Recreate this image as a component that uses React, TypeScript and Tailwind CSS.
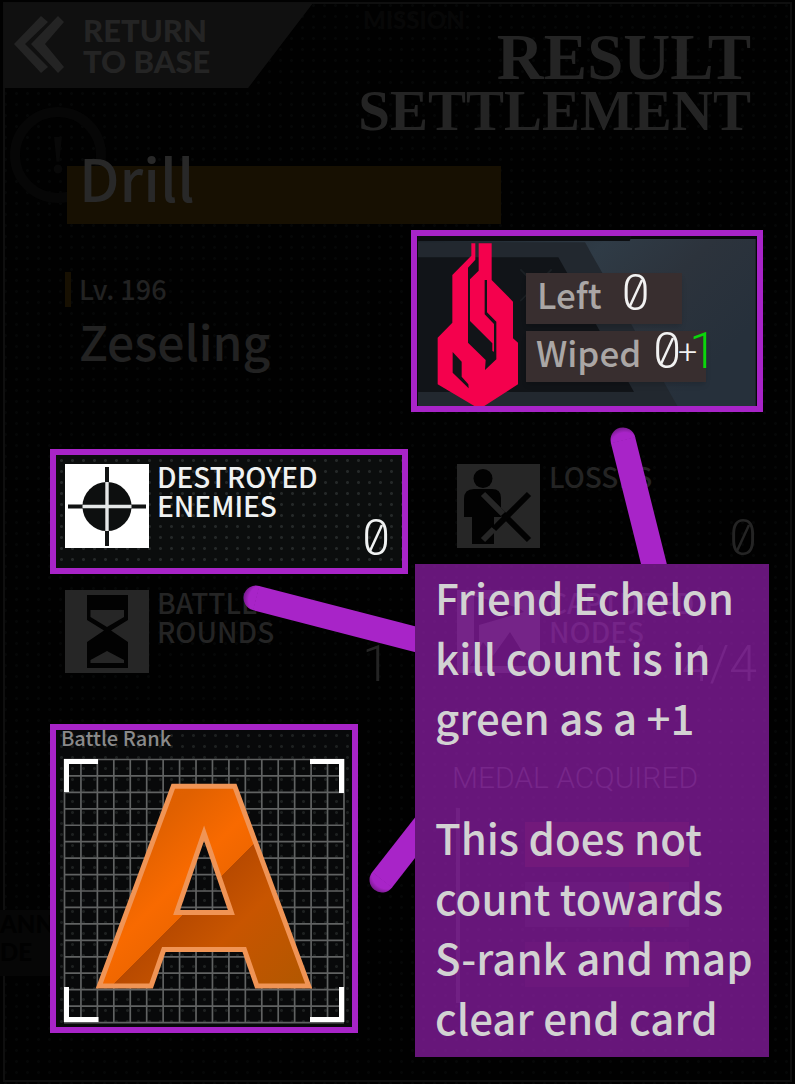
import type { ReactNode } from "react";

const SANS = "font-['Noto_Sans_CJK_SC','Noto_Sans',sans-serif]";

function TargetIcon() {
  return (
    <svg viewBox="0 0 84 84" className="size-[84px] shrink-0" aria-hidden="true">
      <rect width="84" height="84" fill="#ffffff" />
      <path d="M42 3V82M3 42.5H81" stroke="#111313" strokeWidth="4" />
      <circle cx="42" cy="42.5" r="24.5" fill="#0d0f0f" />
      <path d="M42 18V67M17.5 42.5H66.5" stroke="#e4e6e6" strokeWidth="3.4" />
    </svg>
  );
}

function LossIcon() {
  return (
    <svg viewBox="0 0 84 84" className="size-[84px] shrink-0" aria-hidden="true">
      <rect width="83" height="84" fill="#262626" />
      <circle cx="26" cy="14.500" r="9.500" fill="#020202" />
      <path d="M17 25H35Q44 25 44 34V53H37V80H15V53H7V35Q7 25 17 25Z" fill="#020202" />
      <path d="M26 30L49 53L72 76" stroke="#020202" strokeWidth="6" />
      <path d="M26 30L46 50M26 76L37 65" stroke="#262626" strokeWidth="6" />
      <path d="M72 30L37 65" stroke="#020202" strokeWidth="6" />
    </svg>
  );
}

function HourglassIcon() {
  return (
    <svg viewBox="0 0 84 84" className="size-[84px] shrink-0" aria-hidden="true">
      <rect width="84" height="83" fill="#262626" />
      <path d="M22 5H63V30L46 40.500L63 52V78H22V52L39 40.500L22 30Z" fill="#020202" />
      <path d="M25.500 20H59V27L42 37L25.500 27Z" fill="#262626" />
      <path d="M25.500 70L42 61L59 70V73H25.500Z" fill="#262626" />
    </svg>
  );
}

function FlagIcon() {
  return (
    <svg viewBox="0 0 84 84" className="size-[84px] shrink-0" aria-hidden="true">
      <rect width="83" height="83" fill="#262626" />
      <path d="M17 6L62 18L67 22L22 35V75H17Z" fill="#020202" />
      <path d="M13 76L26 52L36 66L53 42L74 76Z" fill="#020202" />
    </svg>
  );
}

function SlashedZero() {
  return (
    <span className="relative inline-block">
      0
      <svg viewBox="0 0 16 30" className="absolute top-[5px] left-[6px] h-[30px] w-[16px]" aria-hidden="true">
        <path d="M2 28L14 2" stroke="currentColor" strokeWidth="2.5" />
      </svg>
    </span>
  );
}

type StatProps = { icon: ReactNode; lines: string[]; value: ReactNode; highlighted?: boolean };

function Stat({ icon, lines, value, highlighted = false }: StatProps) {
  return (
    <article
      className={
        highlighted
          ? "flex h-[125px] border-[6px] border-[#a824c8] bg-[#0b0d0d] bg-[radial-gradient(circle,#242828_1px,transparent_2px)] bg-[size:11px_11px] pt-[7px] pr-[12px] pb-[10px] pl-[9px] text-[#f0f2f2]"
          : "flex h-[125px] border-[6px] border-transparent pt-[7px] pr-[12px] pb-[10px] pl-[9px] text-[#242424]"
      }
    >
      <div className="pt-0.5">{icon}</div>
      <h3 className="min-w-0 pl-[8px] text-[28px] leading-[29px] font-medium">
        {lines.map((l) => (
          <span key={l} className="block">{l}</span>
        ))}
      </h3>
      <p className="ml-auto self-end font-[Roboto,sans-serif] text-[50px] leading-[40px] font-light">{value}</p>
    </article>
  );
}

function EnemyCard() {
  return (
    <article className="relative ml-auto h-[182px] w-[352px] border-[6px] border-[#a824c8] bg-[#08090b]">
      <svg viewBox="36 33 1020 510" className="absolute inset-0 size-full" aria-hidden="true">
        <defs>
          <linearGradient id="steel" x1="0" y1="0" x2="1" y2="0.5">
            <stop offset="0" stopColor="#1d242b" />
            <stop offset="0.45" stopColor="#2f3b46" />
            <stop offset="0.7" stopColor="#2c333c" />
            <stop offset="1" stopColor="#26303b" />
          </linearGradient>
        </defs>
        <rect x="39" y="42" width="1013" height="501" fill="url(#steel)" />
        <path d="M39 33H680L674 48H39Z" fill="#0c0e11" />
        <path d="M39 52H540L817 543H39Z" fill="#22282f" />
        <path d="M39 97H460L687 501H39Z" fill="#111418" />
        <path d="M346 133L440 228M440 133L346 228" stroke="#1b2024" strokeWidth="5" />
        <path
          d="M199 55H211V104L189 128V353L242 405L240 435L274 403V290L246 262V165H239V268L267 297V380L262 378V355L195 288V163L221 137V55H260V165L324 230V340L339 353V478L238 543H208L98 478V338L142 293V150L199 92Z"
          fill="#f4014d"
        />
        <path d="M143 381L170 410V455L190 478L191 490L143 443Z" fill="#111418" />
      </svg>
      <dl className="relative flex flex-col items-start gap-[7px] pt-[37px] pl-[109px] text-[35px] leading-[42px] font-medium text-[#aaa6a5]">
        <div className="flex h-[51px] w-[156px] bg-[#382e2f] pl-[11px] shadow-md">
          <dt>Left</dt>
          <dd className="pl-[20px] font-[Roboto,sans-serif] text-[50px] leading-[40px] font-light text-[#f2f2f2]"><SlashedZero /></dd>
        </div>
        <div className="flex h-[51px] w-[180px] bg-[#382e2f] pl-[10px] shadow-md">
          <dt>Wiped</dt>
          <dd className="flex pl-[12px] font-[Roboto,sans-serif] text-[50px] leading-[40px] font-light text-[#f2f2f2]">
            <SlashedZero />
            <span className="-ml-[3px] text-[34px]">+</span>
            <span className="-ml-[8px] text-[#0bd60b]">1</span>
          </dd>
        </div>
      </dl>
    </article>
  );
}

const columns = Array.from({ length: 18 }, (_, i) => 64.5 + i * 16.44);
const rows = Array.from({ length: 17 }, (_, i) => 759.5 + i * 16.44);

function RankCard() {
  return (
    <article className="w-[308px] border-[6px] border-[#a824c8] bg-[#08090a] bg-[radial-gradient(circle,#1d2020_1px,transparent_2px)] bg-[size:11px_11px]">
      <h3 className="h-[25px] pl-[5px] text-[20px] leading-[16px] font-medium text-[#8a8a8a]">Battle Rank</h3>
      <svg viewBox="56 755 296 272" className="block w-full overflow-visible" role="img" aria-label="Rank A">
        <defs>
          <linearGradient id="rankFill" gradientUnits="userSpaceOnUse" x1="78" y1="748" x2="338" y2="1008">
            <stop offset="0" stopColor="#d85c00" />
            <stop offset="0.3" stopColor="#e06000" />
            <stop offset="0.45" stopColor="#f86a00" />
            <stop offset="0.522" stopColor="#f06700" />
            <stop offset="0.523" stopColor="#b84a00" />
            <stop offset="0.65" stopColor="#c85500" />
            <stop offset="1" stopColor="#a85800" />
          </linearGradient>
        </defs>
        {columns.map((x) => (
          <path key={x} d={`M${x} 759V1022`} stroke="#606262" strokeWidth="1.7" />
        ))}
        {rows.map((y) => (
          <path key={y} d={`M64 ${y}H344`} stroke="#606262" strokeWidth="1.7" />
        ))}
        <path d="M66.500 792V761.500H98M310 761.500H341.500V793M341.500 987V1019.500H310M98.500 1019.500H66.500V987" fill="none" stroke="#ffffff" strokeWidth="5" />
        <text x="204" y="986" textAnchor="middle" fill="url(#rankFill)" stroke="#f09455" strokeWidth="5" className="font-['DejaVu_Sans',sans-serif] text-[274px] font-bold">
          A
        </text>
      </svg>
    </article>
  );
}

function Medals() {
  return (
    <section className="pt-[34px] pl-[10px]">
      <h3 className="font-[Roboto,sans-serif] text-[30px] leading-[40px] font-light text-[#2a2a2a]">MEDAL ACQUIRED</h3>
      <div className="ml-[4px] mt-[10px] flex h-[195px] flex-col gap-[15px] border-l-4 border-[#1a1a1a] pt-[14px] pl-[65px]">
        <div className="h-[45px] w-[164px] bg-[#1e0a03]" />
        <div className="flex h-[45px] w-[164px] justify-end bg-[#0b0b0b] pr-[20px]">
          <div className="w-[40px] bg-[#1a0a01]" />
        </div>
        <div className="h-[45px] w-[164px] bg-[#0e0606]" />
      </div>
    </section>
  );
}

const pointers = [
  { x: 623, y: 440, angle: 76, length: 160 },
  { x: 256, y: 598, angle: 14.5, length: 190 },
  { x: 382, y: 880, angle: -52, length: 90 },
];

function Pointers() {
  return (
    <svg viewBox="0 0 795 1084" className="pointer-events-none absolute top-0 right-0 h-[1084px] w-[795px]" aria-hidden="true">
      <defs>
        <clipPath id="outsideNote">
          <path d="M0 0H795V564H415V1084H0Z" />
        </clipPath>
        <radialGradient id="tip" gradientUnits="userSpaceOnUse" cx="8" cy="0" r="20.5">
          <stop offset="0.74" stopColor="#a824c8" />
          <stop offset="1" stopColor="#761a8c" />
        </radialGradient>
      </defs>
      <g clipPath="url(#outsideNote)">
        {pointers.map((p) => (
          <g key={p.x} transform={`translate(${p.x} ${p.y}) rotate(${p.angle})`}>
            <path d="M0.500 -12.500H0A12.500 12.500 0 0 0 0 12.500H0.500Z" fill="url(#tip)" />
            <path d={`M0 -12.500H${p.length}V12.500H0Z`} fill="#a824c8" />
          </g>
        ))}
      </g>
    </svg>
  );
}

export default function App() {
  return (
    <main className={`relative min-h-screen overflow-hidden bg-[#010101] bg-[radial-gradient(circle,#060707_1px,transparent_2px)] bg-[size:11px_11px] ${SANS}`}>
      <div className="pointer-events-none absolute inset-x-[3px] top-[2px] bottom-[2px] border-2 border-[#0f0f0f]" />
      <div aria-hidden="true" className="absolute top-[107px] left-[10px] flex size-[96px] items-center justify-center rounded-full border-[10px] border-[#060606] font-['Liberation_Serif',serif] text-[54px] font-bold text-[#080808]">!</div>
      <p aria-hidden="true" className="absolute top-[8px] left-[363px] font-[Lato,sans-serif] text-[24px] leading-[24px] font-black text-[#070707]">MISSION</p>
      <p aria-hidden="true" className="absolute top-[910px] left-0 h-[66px] w-[105px] bg-[#060606] font-[Lato,sans-serif] text-[24px] leading-[28px] font-black text-[#010101]">ANNING<br />DE</p>

      <header className="relative flex items-start justify-between pt-[3px] pr-[44px] pl-[4px]">
        <button type="button" className="flex h-[85px] w-[309px] items-start bg-[#101010] pt-[12px] pl-[9px] text-left [clip-path:polygon(0_0,100%_0,79%_100%,0_100%)]">
          <svg viewBox="0 0 52 58" className="h-[58px] w-[52px] shrink-0" aria-hidden="true">
            <path d="M28 1L35 7L12 29L35 52L28 58L1 29ZM45 1L51 7L32 29L51 52L45 58L18 29Z" fill="#242424" />
          </svg>
          <span className="pl-[18px] font-[Lato,sans-serif] text-[31px] leading-[31px] font-black text-[#242424]">RETURN<br />TO BASE</span>
        </button>
        <h1 className="pt-[29px] text-right font-['Liberation_Serif',serif] font-bold text-[#242424]">
          <span className="block text-[65px] leading-[50px]">RESULT</span>
          <span className="block text-[57px] leading-[58px]">SETTLEMENT</span>
        </h1>
      </header>

      <section className="relative pt-[26px] pr-[32px] pl-[65px]">
        <h2 className="ml-[2px] h-[58px] w-[434px] bg-[#171002] pl-[12px] text-[58px] leading-[22px] font-medium text-[#282828]">Drill</h2>
        <div className="flex pt-[6px]">
          <div className="pt-[42px] text-[#222222]">
            <p className="h-[35px] border-l-[6px] border-[#171002] pl-[8px] text-[27px] leading-[34px] font-medium">Lv. 196</p>
            <p className="pl-[14px] text-[48px] leading-[66px] font-medium">Zeseling</p>
          </div>
          <EnemyCard />
        </div>
      </section>

      <section className="relative grid grid-cols-[minmax(0,358fr)_minmax(0,333fr)] gap-x-[34px] gap-y-px pt-[37px] pr-[20px] pl-[50px]">
        <Stat highlighted icon={<TargetIcon />} lines={["DESTROYED", "ENEMIES"]} value={<SlashedZero />} />
        <Stat icon={<LossIcon />} lines={["LOSSES"]} value={<SlashedZero />} />
        <Stat icon={<HourglassIcon />} lines={["BATTLE", "ROUNDS"]} value="1" />
        <Stat icon={<FlagIcon />} lines={["CAPTURED", "NODES"]} value="4/4" />
        <div className="pt-[23px] pb-[51px]">
          <RankCard />
        </div>
        <div className="pt-[23px]">
          <Medals />
        </div>
      </section>

      <Pointers />
      <aside className="absolute top-[564px] right-[26px] w-[354px] bg-[#a824c8]/61 pt-[3px] pb-[10px] pl-[20px] text-[42px] leading-[60px] font-medium text-[#d2d2d2]">
        <p>Friend Echelon<br />kill count is in<br />green as a +1</p>
        <p className="pt-[60px]">This does not<br />count towards<br />S-rank and map<br />clear end card</p>
      </aside>
    </main>
  );
}
